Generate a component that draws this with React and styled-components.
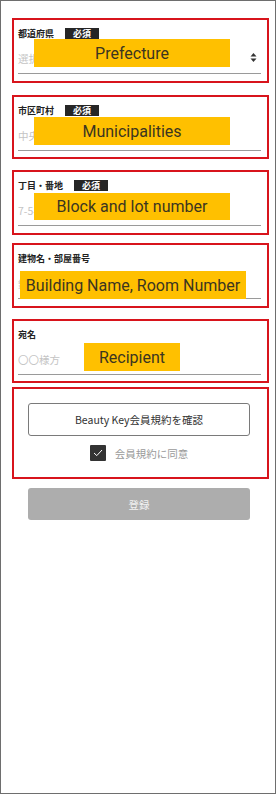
import React from 'react'
import styled, { createGlobalStyle } from 'styled-components'

const GlobalStyle = createGlobalStyle`
  html, body {
    margin: 0;
    padding: 0;
    background: #ffffff;
  }
  body {
    font-family: "Noto Sans CJK JP", "Noto Sans", sans-serif;
    color: #222;
  }
  * { box-sizing: border-box; }
`

const Frame = styled.div`
  width: 276px;
  height: 794px;
  border: 1px solid #6e6e6e;
  padding: 17px 6px 0 11px;
  display: flex;
  flex-direction: column;
`

const FieldBox = styled.div`
  position: relative;
  height: ${p => p.h}px;
  margin-top: ${p => p.mt}px;
  border: 2px solid #d8141c;
  padding: 8px 6px 0 4px;
`

const LabelRow = styled.div`
  display: flex;
  align-items: center;
  height: 11px;
`

const Label = styled.span`
  font-size: 9px;
  font-weight: 700;
  line-height: 11px;
  color: #222;
`

const Badge = styled.span`
  margin-left: 11px;
  background: #262626;
  color: #fff;
  font-size: 9px;
  font-weight: 700;
  line-height: 11px;
  height: 11px;
  padding: 0 8px;
`

const InputRow = styled.div`
  display: flex;
  align-items: center;
  justify-content: space-between;
  margin-top: 4px;
  height: 31px;
  border-bottom: 1.5px solid #9a9a9a;
`

const Placeholder = styled.span`
  font-size: 10.5px;
  color: #c4c4c4;
  padding-top: 1px;
`

const Redact = styled.div`
  position: absolute;
  left: ${p => p.l}px;
  top: ${p => p.t}px;
  width: ${p => p.w}px;
  height: ${p => p.hh}px;
  background: #ffc000;
  color: #3b3520;
  font-family: Roboto, "Noto Sans", sans-serif;
  font-size: 16px;
  display: flex;
  align-items: center;
  justify-content: center;
  white-space: nowrap;
`

const AgreeBox = styled.div`
  height: 92px;
  margin-top: 4px;
  border: 2px solid #d8141c;
  padding: 14px 17px 0 14px;
  display: flex;
  flex-direction: column;
  align-items: center;
`

const TermsButton = styled.button`
  width: 222px;
  height: 33px;
  border: 1px solid #7a7a7a;
  border-radius: 3px;
  background: #fff;
  color: #333;
  font-family: "Noto Sans CJK JP", "Noto Sans", sans-serif;
  font-size: 10.5px;
  cursor: pointer;
`

const CheckRow = styled.label`
  display: flex;
  align-items: center;
  gap: 9px;
  margin-top: 9px;
  font-size: 10.5px;
  color: #9a9a9a;
`

const CheckMark = styled.span`
  width: 16px;
  height: 16px;
  background: #333;
  border-radius: 1px;
  display: flex;
  align-items: center;
  justify-content: center;
`

const SubmitButton = styled.button`
  align-self: flex-start;
  margin: 9px 0 0 16px;
  width: 222px;
  height: 32px;
  border: none;
  border-radius: 3px;
  background: #adadad;
  color: #f2f2f2;
  font-family: "Noto Sans CJK JP", "Noto Sans", sans-serif;
  font-size: 10.5px;
`

const SelectArrow = () => (
  <svg width="7" height="11" viewBox="0 0 7 11" style={{ marginRight: 4, marginTop: -2 }}>
    <path d="M3.5 1 L6.5 4.5 L0.5 4.5 Z" fill="#333" />
    <path d="M3.5 10 L6.5 6.5 L0.5 6.5 Z" fill="#333" />
  </svg>
)

const fields = [
  { label: '都道府県', required: true, ph: '選択してください', select: true, h: 65, mt: 0, redact: { l: 20, t: 19, w: 196, hh: 28, text: 'Prefecture' } },
  { label: '市区町村', required: true, ph: '中央区', h: 64, mt: 12, redact: { l: 20, t: 20, w: 196, hh: 28, text: 'Municipalities' } },
  { label: '丁目・番地', required: true, ph: '7-5-1', h: 65, mt: 11, redact: { l: 20, t: 21, w: 196, hh: 27, text: 'Block and lot number' } },
  { label: '建物名・部屋番号', required: false, ph: '銀座ビル 101', h: 65, mt: 8, redact: { l: 6, t: 26, w: 226, hh: 28, text: 'Building Name, Room Number' } },
  { label: '宛名', required: false, ph: '〇〇様方', h: 64, mt: 11, redact: { l: 70, t: 22, w: 96, hh: 28, text: 'Recipient' } },
]

const App = () => {
  return (
    <>
      <GlobalStyle />
      <Frame>
        {fields.map(f => (
          <FieldBox key={f.label} h={f.h} mt={f.mt}>
            <LabelRow>
              <Label>{f.label}</Label>
              {f.required && <Badge>必須</Badge>}
            </LabelRow>
            <InputRow>
              <Placeholder>{f.ph}</Placeholder>
              {f.select && <SelectArrow />}
            </InputRow>
            <Redact l={f.redact.l} t={f.redact.t} w={f.redact.w} hh={f.redact.hh}>
              {f.redact.text}
            </Redact>
          </FieldBox>
        ))}
        <AgreeBox>
          <TermsButton>Beauty Key会員規約を確認</TermsButton>
          <CheckRow>
            <CheckMark>
              <svg width="10" height="8" viewBox="0 0 10 8">
                <path d="M1 4 L3.8 6.6 L9 1" fill="none" stroke="#fff" strokeWidth="1" />
              </svg>
            </CheckMark>
            会員規約に同意
          </CheckRow>
        </AgreeBox>
        <SubmitButton>登録</SubmitButton>
      </Frame>
    </>
  )
}

export default App
